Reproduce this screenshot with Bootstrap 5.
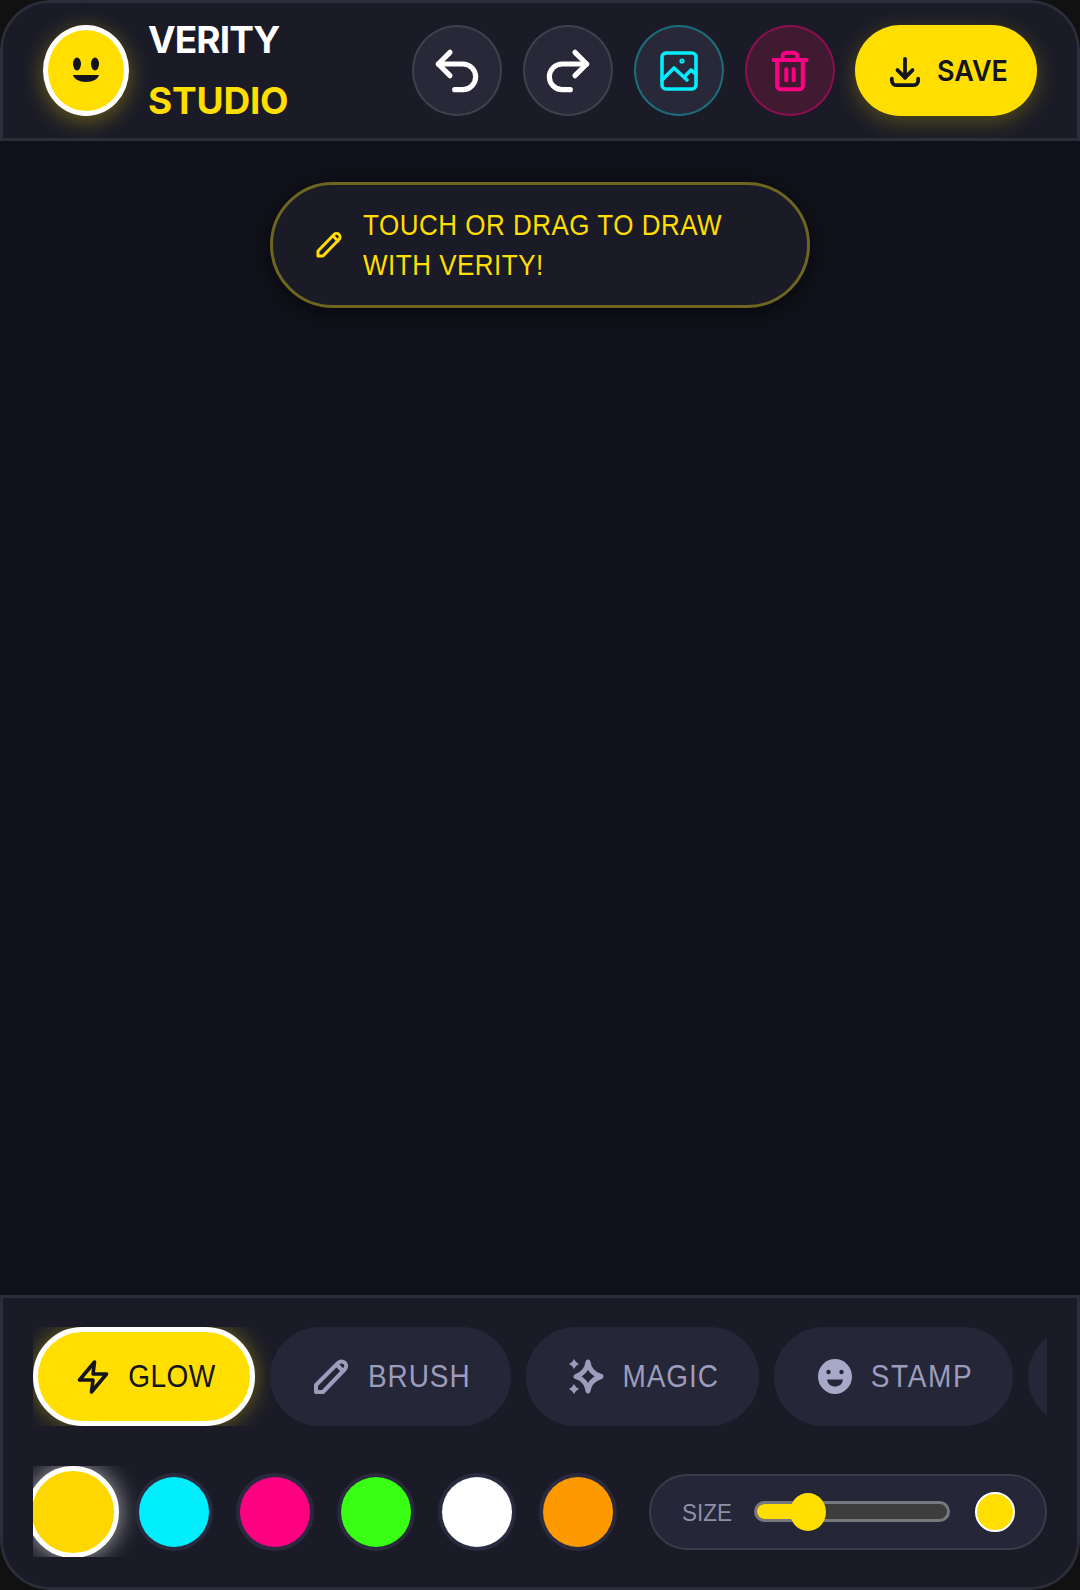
<!DOCTYPE html>
<html lang="en">
<head>
<meta charset="utf-8">
<title>Verity Studio</title>
<link href="https://cdn.jsdelivr.net/npm/bootstrap@5.3.0/dist/css/bootstrap.min.css" rel="stylesheet">
<style>
html,body{margin:0;height:1590px;background:#111;overflow:hidden}
body{font-family:"Liberation Sans",sans-serif}
.shell{width:1080px;height:1590px;border-radius:50px;background:#10111a}
.topbar{height:141px;padding:22px 40px 0;background:#1a1b27;border:3px solid #2c2d3a;border-radius:50px 50px 0 0}
.logo-face{width:86px;height:91px;background:#ffde00;border:5px solid #fff;box-shadow:0 5px 22px rgba(255,222,0,.35)}
.brand{margin-left:19px;font-family:"Inter","Liberation Sans",sans-serif;font-size:37px;font-weight:700;line-height:61px;margin-top:-16px}
.brand-a{color:#fff;letter-spacing:-.9px}
.brand-b{color:#ffde00;letter-spacing:-.2px}
.round-btn{width:90px;height:91px;padding:0;background:#282839;border:2.5px solid #40404d;color:#fff;flex-shrink:0}
.round-btn+.round-btn{margin-left:21px}
.round-cyan{border-color:#1c6c7a;color:#00eeff}
.round-pink{background:#401a30;border-color:#8c0d52;color:#ff0084}
.save-btn{width:182px;height:91px;margin-left:20px;gap:16px;background:#ffde00;border:0;color:#14141c;font-family:"Inter","Liberation Sans",sans-serif;font-size:27px;font-weight:600;box-shadow:0 6px 22px rgba(255,222,0,.25);padding:2px 0 0 5px}
.tall-save{display:inline-block;transform:scaleY(1.06)}
.canvas-area{padding-top:41px;background:#10111a}
.hint{width:540px;height:126px;gap:20px;padding:0 40px 3px 42px;background:#1a1b27;border:3px solid #6d6520;color:#ffde00;font-size:26px;line-height:40px;letter-spacing:.5px;box-shadow:0 4px 24px rgba(0,0,0,.5)}
.hint-line{display:block;white-space:nowrap;transform:scaleY(1.17)}
.dock{height:295px;padding:29px 30px 0;background:#1a1b27;border:3px solid #2c2d3a;border-radius:0 0 50px 50px}
.tabs{height:99px;gap:15px}
.tab-btn{height:99px;padding:0 40px 0 43px;gap:18px;background:#252637;border:0;color:#9c9cbc;font-size:28px;letter-spacing:.9px;flex-shrink:0}
.tab-stamp{letter-spacing:1.600px}
.tab-text{display:inline-block;transform:scaleY(1.1)}
.tab-on{width:222px;padding:0 0 0 3px;gap:17px;background:#ffde00;border:5px solid #fff;color:#14141c;letter-spacing:.5px;box-shadow:0 0 22px rgba(255,222,0,.4)}
.tab-more{width:120px}
.controls{margin-top:40px;height:91px}
.swatches{height:91px;gap:31px;padding:0 5px}
.dot{width:70px;height:70px;border-radius:50%;box-shadow:0 0 0 4px #292a3d;flex-shrink:0}
.dot-on{width:92px;height:92px;margin:0 -11px;border:5px solid #fff;box-shadow:0 0 24px rgba(255,255,255,.65)}
.size-pill{width:398px;height:76px;padding:0 30px 0 31px;background:#252637;border:2.5px solid #3b3c4b}
.size-label{display:inline-block;width:50px;margin-top:4px;color:#8f8fa6;font-size:22.500px;margin-right:22px;transform:scaleY(1.06)}
.track{width:196px;height:21px;background:#3d3d3d;border:3px solid #77777d}
.track-fill{background:#ffde00;height:100%}
.thumb{width:36px;height:38px;top:-11px;margin-left:-18px;background:#ffde00}
.size-dot{width:40px;height:40px;margin-left:auto;background:#ffde00;border:2px solid #fff}
</style>
</head>
<body>
<div class="shell d-flex flex-column overflow-hidden">
  <header class="topbar d-flex align-items-start">
    <div class="logo-face rounded-circle flex-shrink-0 d-flex align-items-center justify-content-center">
      <svg width="40" height="34" viewBox="0 0 40 34"><ellipse cx="11" cy="10" rx="4" ry="6.500" fill="#14141c"/><ellipse cx="29" cy="10" rx="4" ry="6.500" fill="#14141c"/><path d="M7 21h26c-1 4-6 7-13 7S8 25 7 21z" fill="#14141c"/></svg>
    </div>
    <div class="brand"><div class="brand-a">VERITY</div><div class="brand-b">STUDIO</div></div>
    <div class="d-flex ms-auto">
      <button class="btn round-btn rounded-circle d-flex align-items-center justify-content-center" aria-label="Undo">
        <svg width="56" height="56" viewBox="0 0 24 24" fill="none" stroke="currentColor" stroke-width="2.200" stroke-linecap="round" stroke-linejoin="round"><path d="M9 14 4 9l5-5"/><path d="M4 9h10.500a5.500 5.500 0 0 1 0 11H11"/></svg>
      </button>
      <button class="btn round-btn rounded-circle d-flex align-items-center justify-content-center" aria-label="Redo">
        <svg width="56" height="56" viewBox="0 0 24 24" fill="none" stroke="currentColor" stroke-width="2.200" stroke-linecap="round" stroke-linejoin="round"><path d="m15 14 5-5-5-5"/><path d="M20 9H9.500a5.500 5.500 0 0 0 0 11H13"/></svg>
      </button>
      <button class="btn round-btn round-cyan rounded-circle d-flex align-items-center justify-content-center" aria-label="Image">
        <svg width="40" height="40" viewBox="0 0 40 40" fill="none" stroke="currentColor" stroke-width="3.600" stroke-linecap="round" stroke-linejoin="round"><rect x="3" y="2" width="34" height="36" rx="4"/><path d="M3 29 15 17l13 12"/><path d="M27 24l5-5 5 4"/><circle cx="23" cy="10" r=".8" fill="currentColor"/></svg>
      </button>
      <button class="btn round-btn round-pink rounded-circle d-flex align-items-center justify-content-center" aria-label="Delete">
        <svg width="44" height="46" viewBox="0 0 24 24" fill="none" stroke="currentColor" stroke-width="2.200" stroke-linecap="round" stroke-linejoin="round"><path d="M3 6h18"/><path d="M19 6v14a2 2 0 0 1-2 2H7a2 2 0 0 1-2-2V6"/><path d="M8 6V4a2 2 0 0 1 2-2h4a2 2 0 0 1 2 2v2"/><path d="M10 11v6"/><path d="M14 11v6"/></svg>
      </button>
      <button class="btn save-btn rounded-pill d-flex align-items-center justify-content-center">
        <svg width="32" height="32" viewBox="0 0 34 34" fill="none" stroke="currentColor" stroke-width="4" stroke-linecap="round" stroke-linejoin="round"><path d="M17 3v20"/><path d="M9 15l8 8 8-8"/><path d="M3 24v2a5 5 0 0 0 5 5h18a5 5 0 0 0 5-5v-2"/></svg>
        <span class="tall-save">SAVE</span>
      </button>
    </div>
  </header>

  <main class="canvas-area flex-grow-1 d-flex flex-column align-items-center">
    <div class="hint rounded-pill d-flex align-items-center">
      <svg class="flex-shrink-0" width="28" height="28" viewBox="0 0 28 28" fill="none" stroke="currentColor" stroke-width="3" stroke-linejoin="round" stroke-linecap="round"><path d="M3 21 19 4.500a3.500 3.500 0 0 1 5 5L8 26H3z"/><path d="M18 6l5 5"/></svg>
      <div><span class="hint-line">TOUCH OR DRAG TO DRAW</span><span class="hint-line">WITH VERITY!</span></div>
    </div>
  </main>

  <section class="dock">
    <div class="tabs d-flex overflow-hidden">
      <button class="btn tab-btn tab-on rounded-pill d-flex align-items-center justify-content-center">
        <svg width="36" height="38" viewBox="0 0 24 24" fill="none" stroke="currentColor" stroke-width="2.400" stroke-linecap="round" stroke-linejoin="round"><path d="M13 2 3 14h9l-1 8 10-12h-9l1-8z"/></svg>
        <span class="tab-text">GLOW</span>
      </button>
      <button class="btn tab-btn rounded-pill d-flex align-items-center justify-content-center">
        <svg width="37" height="37" viewBox="0 0 37 37" fill="none" stroke="currentColor" stroke-width="4" stroke-linecap="round" stroke-linejoin="round"><path d="M3 27 25 5a4.500 4.500 0 0 1 7 6L10 34H3z"/><path d="M24 7l6 6"/></svg>
        <span class="tab-text">BRUSH</span>
      </button>
      <button class="btn tab-btn rounded-pill d-flex align-items-center justify-content-center">
        <svg width="36" height="37" viewBox="0 0 36 37" fill="none"><path d="M19 4C20 12 24 16 32 18.500 24 21 20 25 19 33 18 25 14 21 7 18.500 14 16 18 12 19 4z" stroke="currentColor" stroke-width="5" stroke-linejoin="round"/><path d="M5 1l2 3 3 2-3 2-2 3-2-3-3-2 3-2zM5 26l2 3 3 2-3 2-2 3-2-3-3-2 3-2z" fill="currentColor"/></svg>
        <span class="tab-text">MAGIC</span>
      </button>
      <button class="btn tab-btn tab-stamp rounded-pill d-flex align-items-center justify-content-center">
        <svg width="36" height="37" viewBox="0 0 36 37"><ellipse cx="18" cy="18.500" rx="17" ry="17.500" fill="#a8a8c8"/><circle cx="11.500" cy="14" r="2.200" fill="#252637"/><circle cx="24.500" cy="14" r="2.200" fill="#252637"/><path d="M10 21.500h16c-1 5-4 7-8 7s-7-2-8-7z" fill="#252637"/></svg>
        <span class="tab-text">STAMP</span>
      </button>
      <button class="btn tab-btn tab-more rounded-pill" aria-label="More tools"></button>
    </div>
    <div class="controls d-flex align-items-center justify-content-between">
      <div class="swatches d-flex align-items-center overflow-hidden">
        <div class="dot dot-on" style="background:#ffd700"></div>
        <div class="dot" style="background:#00eeff"></div>
        <div class="dot" style="background:#ff0080"></div>
        <div class="dot" style="background:#39ff14"></div>
        <div class="dot" style="background:#ffffff"></div>
        <div class="dot" style="background:#ff9900"></div>
      </div>
      <div class="size-pill rounded-pill d-flex align-items-center">
        <span class="size-label">SIZE</span>
        <div class="track rounded-pill position-relative">
          <div class="track-fill rounded-pill" style="width:27%"></div>
          <div class="thumb rounded-circle position-absolute" style="left:27%"></div>
        </div>
        <div class="size-dot rounded-circle"></div>
      </div>
    </div>
  </section>
</div>
<script src="https://cdn.jsdelivr.net/npm/bootstrap@5.3.0/dist/js/bootstrap.bundle.min.js"></script>
</body>
</html>
